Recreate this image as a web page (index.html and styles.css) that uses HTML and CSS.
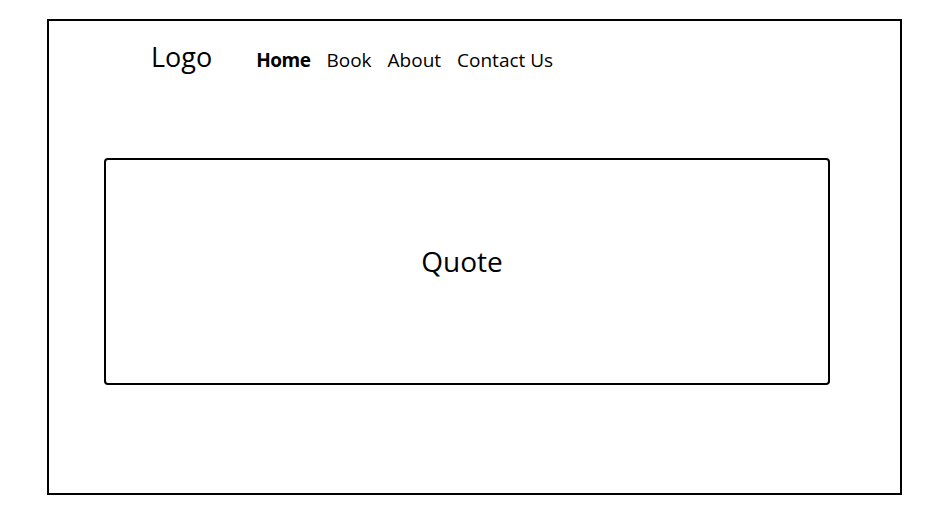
FILE: index.html
```html
<!DOCTYPE html>
<html>
<head>
<meta charset="utf-8">
<link rel="stylesheet" href="styles.css">
</head>
<body>
<div class="frame">
  <header class="header">
    <div class="logo">Logo</div>
    <nav class="nav">
      <a class="nav-item active">Home</a>
      <a class="nav-item">Book</a>
      <a class="nav-item">About</a>
      <a class="nav-item">Contact Us</a>
    </nav>
  </header>
  <section class="quote">
    <span class="quote-text">Quote</span>
  </section>
</div>
</body>
</html>
```
FILE: styles.css
```css
html, body {
  margin: 0;
  padding: 0;
  background: #ffffff;
}
body {
  font-family: "Open Sans", "Noto Sans", sans-serif;
  color: #000;
}
.frame {
  box-sizing: border-box;
  margin: 19px 0 0 47px;
  width: 855px;
  height: 476px;
  border: 2px solid #000;
}
.header {
  display: flex;
  align-items: baseline;
  padding: 19px 0 0 102px;
  height: 115px;
  box-sizing: border-box;
}
.logo {
  font-size: 27px;
  line-height: 34px;
  letter-spacing: 0;
}
.nav {
  display: flex;
  gap: 16px;
  margin-left: 44px;
}
.nav-item {
  font-size: 19px;
  letter-spacing: 0;
}
.nav-item.active {
  font-weight: 700;
  letter-spacing: -0.5px;
}
.quote {
  box-sizing: border-box;
  margin: 22px 0 0 55px;
  width: 726px;
  height: 227px;
  border: 2px solid #000;
  border-radius: 4px;
  display: flex;
  align-items: center;
  justify-content: center;
}
.quote-text {
  font-size: 28px;
  letter-spacing: 0;
  margin: 0 10px 22px 0;
}
```
